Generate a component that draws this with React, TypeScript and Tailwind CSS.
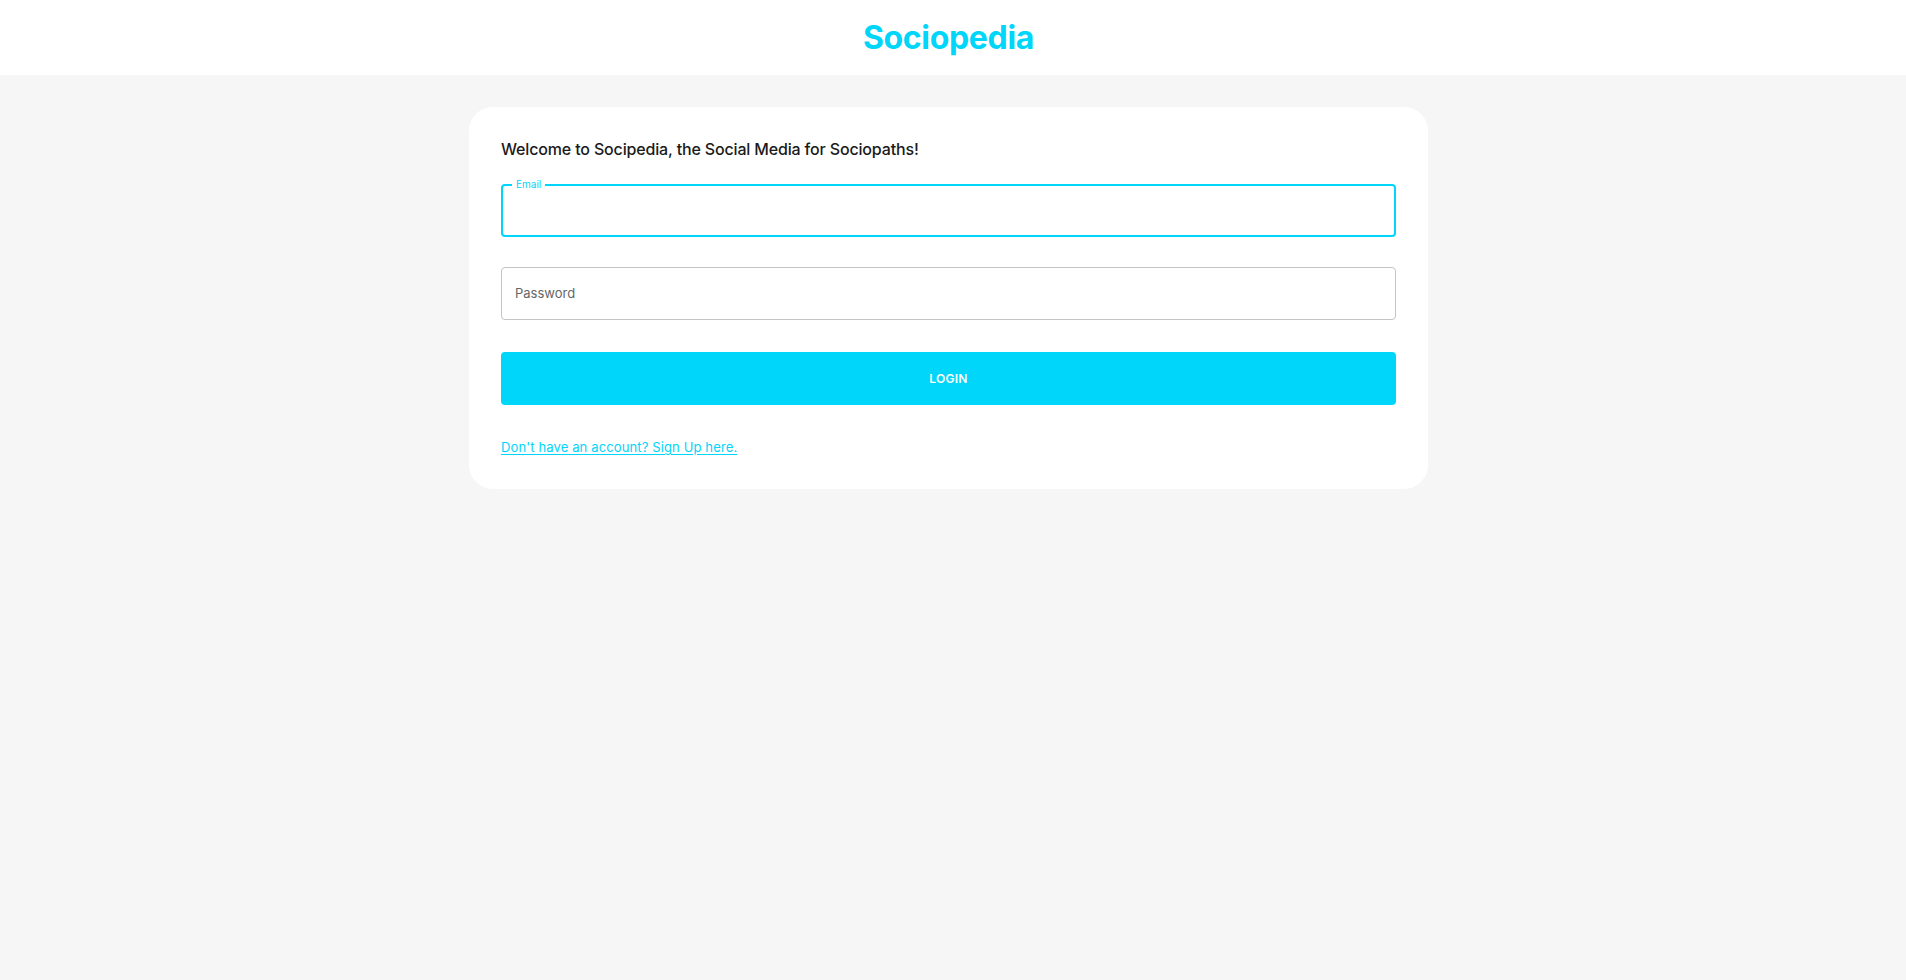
export default function App() {
  return (
    <div className="min-h-screen w-full bg-[#f6f6f6] font-['Inter','Liberation_Sans',sans-serif]">
      <header className="flex h-[75px] w-full items-center justify-center bg-white pr-[9px]">
        <h1 className="text-[32px] font-bold leading-none tracking-[-0.01em] text-[#00d5fa]">Sociopedia</h1>
      </header>

      <div className="flex justify-center pr-[9px] pt-[32px]">
        <div className="w-[959px] rounded-[24px] bg-white p-[32px]">
          <h5 className="mb-[24px] text-[16px] font-medium leading-[21px] tracking-[-0.01em] text-[#1a1a1a]">
            Welcome to Socipedia, the Social Media for Sociopaths!
          </h5>

          <form className="flex flex-col" onSubmit={(e) => e.preventDefault()}>
            <div className="flex flex-col gap-[30px]">
              <div className="relative h-[53px] rounded-[4px] border-2 border-[#00d5fa]">
                <span className="absolute left-[9px] top-[-8px] bg-white px-[4px] text-[10px] leading-[12px] text-[#00d5fa]">
                  Email
                </span>
                <input className="h-full w-full bg-transparent px-[12px] text-[13px] outline-none" />
              </div>

              <div className="flex h-[53px] items-center rounded-[4px] border border-[#c4c4c4] px-[13px]">
                <input
                  type="password"
                  placeholder="Password"
                  className="w-full bg-transparent text-[13px] text-[#333] outline-none placeholder:text-[#666]"
                />
              </div>
            </div>

            <button
              type="submit"
              className="my-[32px] h-[53px] w-full rounded-[4px] bg-[#00d5fa] text-[12px] font-semibold uppercase tracking-[0.02em] text-white"
            >
              Login
            </button>

            <a href="#" className="text-[13px] leading-[20px] tracking-[0.01em] text-[#00d5fa] underline underline-offset-2">
              Don't have an account? Sign Up here.
            </a>
          </form>
        </div>
      </div>
    </div>
  );
}
